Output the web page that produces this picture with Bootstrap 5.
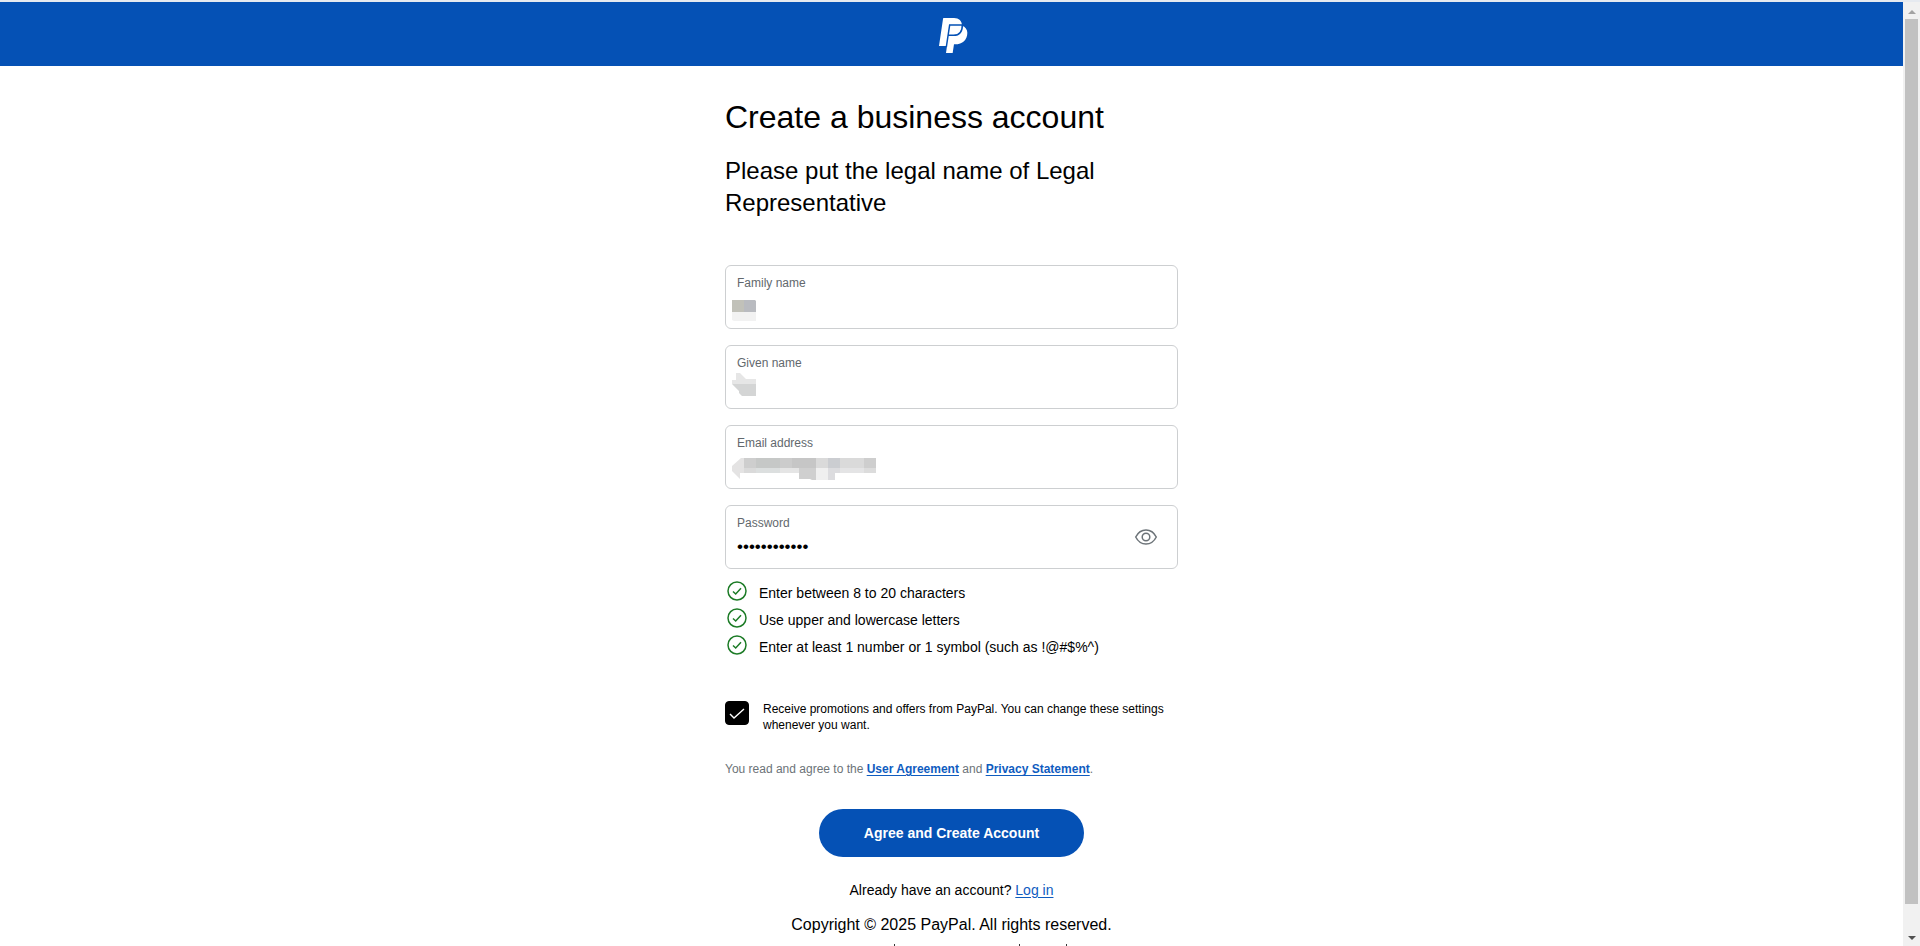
<!DOCTYPE html>
<html lang="en">
<head>
<meta charset="utf-8">
<meta name="viewport" content="width=device-width, initial-scale=1">
<title>Create a business account</title>
<link href="https://cdn.jsdelivr.net/npm/bootstrap@5.3.0/dist/css/bootstrap.min.css" rel="stylesheet">
<style>
  body { font-family: "Liberation Sans", Arial, sans-serif; font-size: 14px; line-height: 20px; color: #000; background: #fff; }
  .page { border-top: 2px solid #e6eaf0; }
  .brand-bar { background: #0551b5; height: 64px; padding: 2px 0 0 2px; }
  .signup { max-width: 453px; padding-top: 31px; }
  .signup h1 { font-size: 32px; line-height: 40px; font-weight: 400; margin-bottom: 18px; }
  .signup h2 { font-size: 24px; line-height: 32px; font-weight: 400; margin-bottom: 46px; }
  .field { height: 64px; padding: 9px 11px; border: 1px solid #cdcfd1; border-radius: 6px; }
  .field label { font-size: 12px; line-height: 16px; color: #62686d; }
  .field input { border: 0; outline: 0; padding: 0; height: 32px; font: 17px "Liberation Sans", Arial, sans-serif; background: transparent; }
  .masked { left: 6px; }
  .masked-family { top: 34px; }
  .masked-given { top: 27px; }
  .masked-email { top: 32px; }
  .rules { padding-top: 8px; margin-bottom: 43px; }
  .rules li { height: 27px; gap: 12px; padding-left: 2px; }
  .rules span { padding-top: 4px; }
  .promo { font-size: 12px; line-height: 16px; gap: 14px; margin-bottom: 28px; }
  .promo .form-check-input { width: 24px; height: 24px; border-radius: 4px; }
  .promo .form-check-input:checked { background-color: #000; border-color: #000; background-size: 24px;
    background-image: url("data:image/svg+xml,%3Csvg xmlns='http://www.w3.org/2000/svg' viewBox='0 0 24 24'%3E%3Cpath d='M5 13l4 4L19 8' fill='none' stroke='white' stroke-width='1.4'/%3E%3C/svg%3E"); }
  .terms { font-size: 12px; line-height: 16px; color: #6c7378; margin-bottom: 32px; }
  .signup a { color: #0f5cbf; text-underline-offset: 2px; }
  .btn-create { width: 265px; height: 48px; font-size: 14px; font-weight: 700; background: #0551b5; color: #fff; margin-bottom: 23px; }
  .btn-create:hover { background: #003f94; color: #fff; }
  .login { margin-bottom: 13px; }
  .copyright { font-size: 16px; line-height: 24px; margin-bottom: 7px; }
  .foot-links li { height: 16px; border-left: 1px solid #333; }
  .foot-links li:nth-child(1) { width: 58px; border: 0; }
  .foot-links li:nth-child(2) { width: 125px; }
  .foot-links li:nth-child(3) { width: 47px; }
  .scroll-rail { width: 17px; background: #f1f1f1; padding: 8px 2px 6px; }
  .scroll-thumb { background: #c1c1c1; margin: 5px 0 32px; }
</style>
</head>
<body>
<div class="page d-flex vh-100 overflow-hidden">
  <div class="flex-grow-1 overflow-hidden">
    <header class="brand-bar d-flex justify-content-center align-items-center">
      <svg width="30" height="37" viewBox="114 51 90 111" role="img" aria-label="PayPal">
        <path fill="#fff" d="M131 54H162C177 54 186 63 186 77C196 80 202 88 202 98C202 119 188 133 165 133H162L158 159H138L141 138H117L129 57Q129 54 131 54Z"/>
        <path fill="none" stroke="#0551b5" stroke-width="4.5" d="M139 141L149 75H187C187 95 178 106 161 106H146"/>
      </svg>
    </header>
    <main class="signup mx-auto">
      <h1>Create a business account</h1>
      <h2>Please put the legal name of Legal Representative</h2>
      <form>
        <div class="d-flex flex-column gap-3">
          <div class="field position-relative">
            <label class="d-block" for="family">Family name</label>
            <input class="w-100" id="family" type="text">
            <svg class="masked masked-family position-absolute" width="24" height="21" aria-hidden="true">
              <path fill="#c1c1b9" d="M0 0h12v12H0z"/><path fill="#b9bbc0" d="M12 0h11l1 1v11H12z"/><path fill="#f2f2f2" d="M0 12h24v9H2l-2-1z"/>
            </svg>
          </div>
          <div class="field position-relative">
            <label class="d-block" for="given">Given name</label>
            <input class="w-100" id="given" type="text">
            <svg class="masked masked-given position-absolute" width="24" height="23" aria-hidden="true">
              <path fill="#e6e6e6" d="M4 0h4l6 6h10v5H0V7h4z"/><path fill="#d4d5d5" d="M0 11h24v12H10l-3-3v-2z"/>
            </svg>
          </div>
          <div class="field position-relative">
            <label class="d-block" for="email">Email address</label>
            <input class="w-100" id="email" type="email">
            <svg class="masked masked-email position-absolute" width="144" height="22" aria-hidden="true">
              <path fill="#e4e3e3" d="M9 0h3v15H8v6L0 13V8z"/>
              <path fill="#cecece" d="M12 0h12v10H12z"/><path fill="#c6c8c7" d="M24 0h24v10H24z"/><path fill="#cccccc" d="M48 0h12v10H48z"/><path fill="#c6c6c6" d="M60 0h24v10H60z"/>
              <path fill="#dadada" d="M84 0h12v10H84z"/><path fill="#cbcdd1" d="M96 0h12v10H96z"/><path fill="#dadada" d="M108 0h24v10h-24z"/><path fill="#cecece" d="M132 0h12v10h-12z"/>
              <path fill="#dadada" d="M12 10h12v5H12z"/><path fill="#dcdfdf" d="M24 10h24v5H24z"/><path fill="#e5e5e5" d="M48 10h19v5H48z"/>
              <path fill="#cfcfcf" d="M67 10h17v12h-4l-2-1H67z"/><path fill="#efefef" d="M84 10h12v12H84z"/><path fill="#dcdcdf" d="M96 10h12v5h-5v7h-7z"/>
              <path fill="#e4e4e5" d="M108 10h24v5h-24z"/><path fill="#dcdcdc" d="M132 10h12v5h-12z"/>
            </svg>
          </div>
          <div class="field d-flex justify-content-between align-items-center">
            <div class="flex-grow-1 align-self-start">
              <label class="d-block" for="password">Password</label>
              <input class="w-100" id="password" type="password" value="Abcdefgh123!">
            </div>
            <button type="button" class="btn p-0 border-0 lh-1 me-2" aria-label="Show password">
              <svg class="d-block" width="24" height="18" viewBox="0 0 24 18" fill="none" stroke="#6c7378" stroke-width="1.5">
                <path d="M1.700 9C4 4.500 7.500 2 12 2S20 4.500 22.300 9C20 13.500 16.500 16 12 16S4 13.500 1.700 9Z"/><circle cx="12" cy="9" r="3.800"/>
              </svg>
            </button>
          </div>
        </div>
        <svg class="d-none"><symbol id="tick" viewBox="0 0 20 20"><g fill="none" stroke="#1c7b26" stroke-width="1.5"><circle cx="10" cy="10" r="9"/><path d="M6 10.500l2.700 2.500L14 7.200"/></g></symbol></svg>
        <ul class="rules list-unstyled">
          <li class="d-flex align-items-center"><svg width="20" height="20" aria-hidden="true"><use href="#tick"/></svg><span>Enter between 8 to 20 characters</span></li>
          <li class="d-flex align-items-center"><svg width="20" height="20" aria-hidden="true"><use href="#tick"/></svg><span>Use upper and lowercase letters</span></li>
          <li class="d-flex align-items-center"><svg width="20" height="20" aria-hidden="true"><use href="#tick"/></svg><span>Enter at least 1 number or 1 symbol (such as !@#$%^)</span></li>
        </ul>
        <div class="promo d-flex">
          <input class="form-check-input flex-shrink-0 m-0" type="checkbox" id="promo" checked>
          <label for="promo">Receive promotions and offers from PayPal. You can change these settings whenever you want.</label>
        </div>
        <p class="terms">You read and agree to the <a class="fw-bold" href="#">User Agreement</a> and <a class="fw-bold" href="#">Privacy Statement</a>.</p>
        <button type="submit" class="btn btn-create rounded-pill d-block mx-auto">Agree and Create Account</button>
      </form>
      <p class="login text-center">Already have an account? <a href="#">Log in</a></p>
    </main>
    <footer>
      <p class="copyright text-center">Copyright © 2025 PayPal. All rights reserved.</p>
      <ul class="foot-links list-unstyled d-flex justify-content-center m-0"><li></li><li></li><li></li><li></li></ul>
    </footer>
  </div>
  <div class="scroll-rail d-flex flex-column flex-shrink-0" aria-hidden="true">
    <svg class="d-block mx-auto" width="8" height="4"><path fill="#a3a3a3" d="M4 0L8 4H0z"/></svg>
    <div class="scroll-thumb flex-grow-1"></div>
    <svg class="d-block mx-auto" width="8" height="4"><path fill="#505050" d="M0 0h8L4 4z"/></svg>
  </div>
</div>
<script src="https://cdn.jsdelivr.net/npm/bootstrap@5.3.0/dist/js/bootstrap.bundle.min.js"></script>
</body>
</html>
